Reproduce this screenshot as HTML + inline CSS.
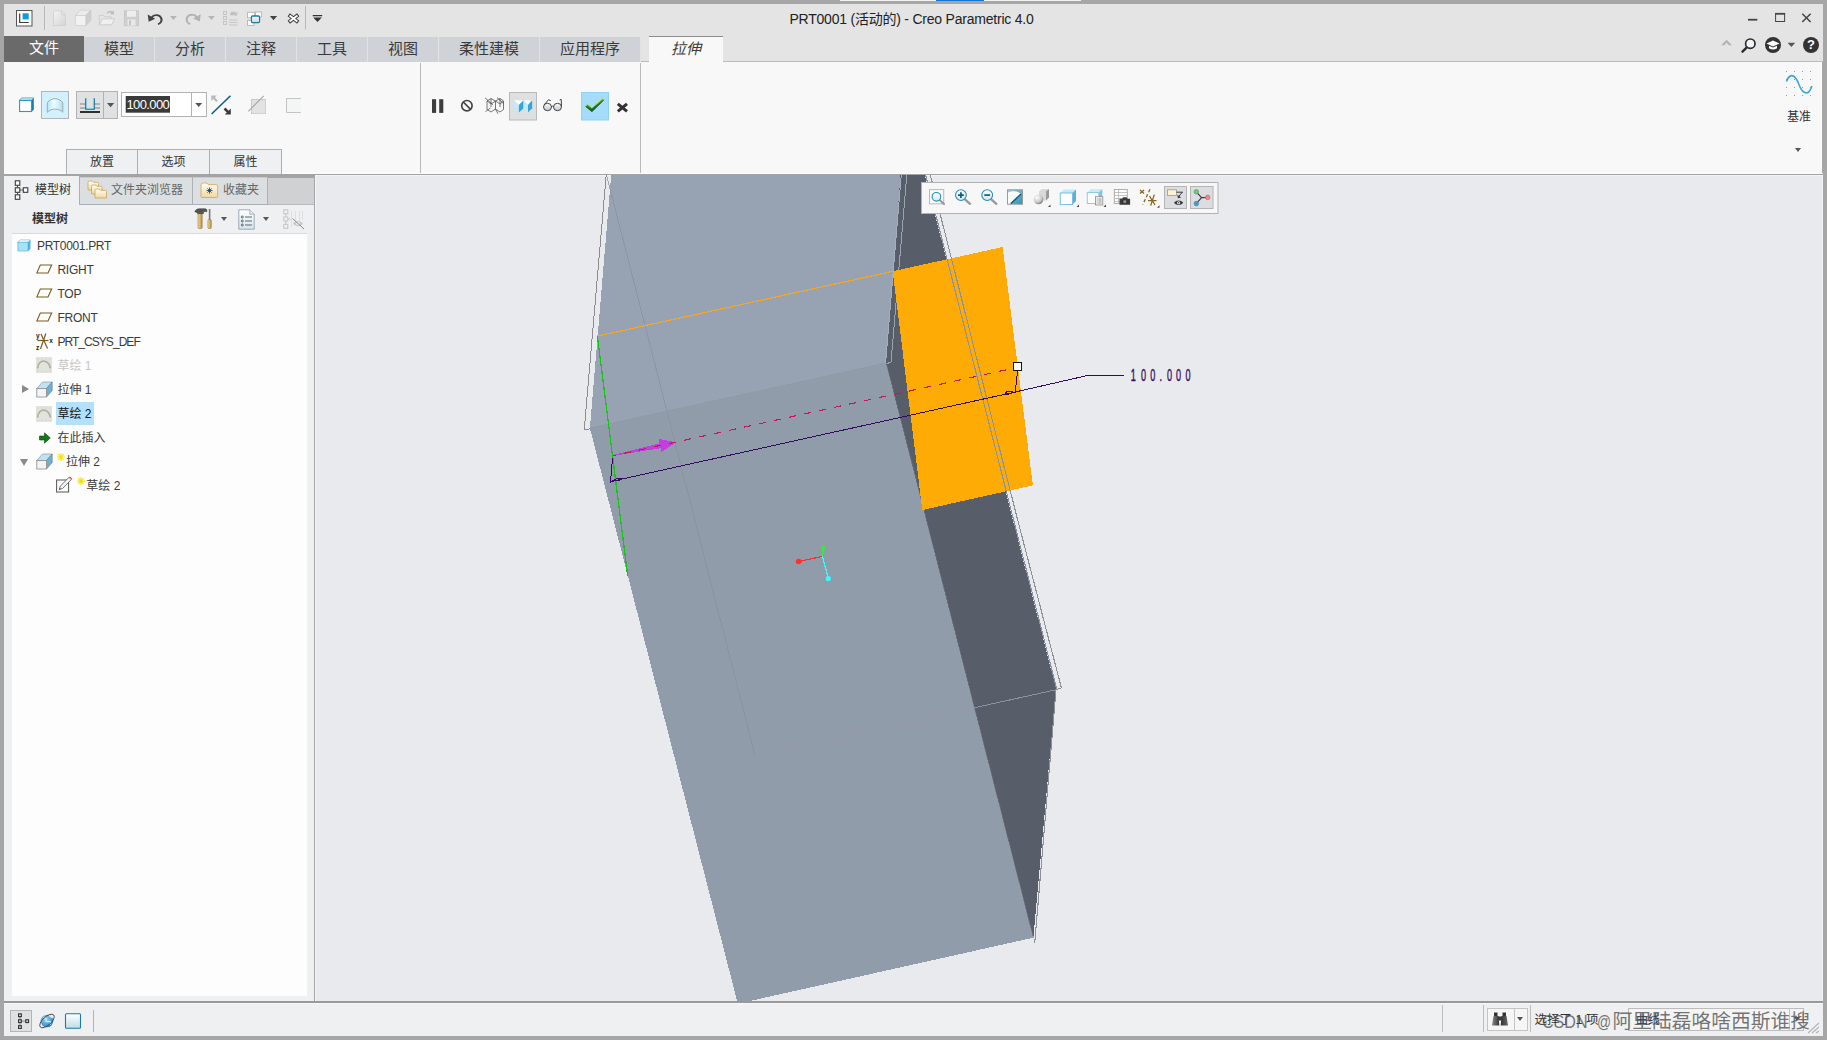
<!DOCTYPE html>
<html lang="zh-CN">
<head>
<meta charset="utf-8">
<title>PRT0001 (活动的) - Creo Parametric 4.0</title>
<style>
*{box-sizing:border-box;margin:0;padding:0}
html,body{width:1827px;height:1040px;overflow:hidden}
body{background:#a6a6a6;font-family:"Liberation Sans","Noto Sans CJK SC",sans-serif;font-size:12px;color:#333;position:relative}
.abs{position:absolute}
#titlebar{left:4px;top:4px;width:1819px;height:58px;background:#e4e4e4}
#title{left:-2px;top:3.5px;width:1819px;text-align:center;font-size:14px;color:#222;letter-spacing:-0.22px;white-space:nowrap}
.tab{top:33px;height:25px;background:#cfd3d7;font-size:15px;line-height:23px;text-align:center;color:#3a3a3a;border-right:1px solid #e0e3e6}
#ribbon{left:4px;top:62px;width:1818px;height:111px;background:#f8f8f8;border-top:1px solid #f8f8f8;box-shadow:inset -1px 0 0 #fdfdfd}
#ribline{left:4px;top:173px;width:1819px;height:2px;background:linear-gradient(#fdfdfd 0,#fdfdfd 1px,#a3a3a3 1px)}
.vsep{width:1px;background:#b4b4b4}
.btab{top:149px;height:25px;background:#eff0f2;border:1px solid #ababab;border-bottom:none;font-size:12px;text-align:center;line-height:24px;color:#333}
#panel{left:4px;top:175px;width:310px;height:826px;background:#eff0f2}
#viewport{left:315px;top:175px;width:1508px;height:826px;background:#e9eaee;overflow:hidden;box-shadow:inset 1px 1px 0 #f3f4f7,inset -1px 0 0 #f3f4f7}
#status{left:4px;top:1001px;width:1819px;height:35px;background:#eff0f2;border-top:2px solid #999;box-shadow:inset 0 1px 0 #f6f7f8}
.trow{left:0;height:24px;line-height:24px;font-size:12px;color:#3a3a3a;white-space:nowrap}
</style>
</head>
<body>
<!-- title bar -->
<div id="titlebar" class="abs">
  <svg class="abs" style="left:0;top:0" width="330" height="32" viewBox="4 4 330 32">
<defs><linearGradient id="gd" x1="0" y1="0" x2="1" y2="1"><stop offset="0" stop-color="#f4f4f4"/><stop offset="1" stop-color="#d4d4d4"/></linearGradient></defs>
<rect x="16.500" y="10.500" width="15.500" height="15.500" fill="#fff" stroke="#555"/>
<path d="M19.700 13.500v9h9" fill="none" stroke="#3a3a3a" stroke-width="1.200"/>
<rect x="22.600" y="13.300" width="6.100" height="6.100" fill="#0a9be0"/>
<path d="M44.500 6v24" stroke="#b9b9b9"/>
<path d="M53.500 10.800h8l4 4v10.700h-12z" fill="url(#gd)" stroke="#cfcfcf" stroke-width=".8"/><path d="M61.500 10.800v4h4" fill="none" stroke="#cfcfcf" stroke-width=".8"/>
<path d="M75.300 15.500l5-5.200h10.500l-5 5.200z" fill="#ececec" stroke="#cdcdcd" stroke-width=".7"/><path d="M85.800 15.500l5-5.200v10l-5 5.300z" fill="#cfcfcf" stroke="#c5c5c5" stroke-width=".7"/><rect x="75.300" y="15.500" width="10.500" height="10" fill="#f2f2f2" stroke="#cdcdcd" stroke-width=".7"/>
<path d="M99.300 24.800v-9.500h4l1.200 1.500h6.500v2" fill="#e6e6e6" stroke="#c6c6c6" stroke-width=".8"/><path d="M99.300 24.800l3-6h12.300l-3 6z" fill="#efefef" stroke="#c6c6c6" stroke-width=".8"/><path d="M106.500 13c2-2.500 4.500-2.800 6-1.500l1-1.500.8 4.500-4.300-.5 1.200-1.200c-1.300-.8-2.800-.3-3.800 1z" fill="#bdbdbd"/>
<path d="M124.500 10.800h14v14.800h-14z" fill="#cfcfcf" stroke="#c0c0c0" stroke-width=".7"/><rect x="127" y="10.800" width="9" height="6" fill="#ededed"/><rect x="127.500" y="19.500" width="8" height="6" fill="#e9e9e9"/><rect x="129" y="20.500" width="2" height="4.500" fill="#c5c5c5"/>
<path d="M147.700 14.600l1 7.200 6.500-3-2.300-1.200c2.500-2.600 6.700-1.600 7.500 1.400.6 2.200-.8 3.900-2.700 4.400l.5 1.600c3-.7 5-3.500 4.200-6.700-1.200-4.600-7.800-5.700-11.200-1.700z" fill="#444"/>
<path d="M170 16h6.800l-3.400 4z" fill="#b5b5b5"/>
<path d="M200.800 14l-1 7.500-6.700-3 2.400-1.300c-2.600-2.600-6.900-1.600-7.700 1.500-.6 2.200.8 4 2.800 4.500l-.5 1.600c-3.100-.7-5.100-3.600-4.300-6.800 1.200-4.700 8-5.800 11.500-1.800z" fill="#b3b3b3"/>
<path d="M208 16h6.800l-3.400 4z" fill="#b5b5b5"/>
<g fill="none" stroke="#c3c3c3" stroke-width=".9"><rect x="223.500" y="11.500" width="3" height="3"/><rect x="223.500" y="16.500" width="3" height="3"/><rect x="223.500" y="21.500" width="3" height="3"/><path d="M229 20h8.500M229 22.500h8.500M229 25h8.500"/></g>
<path d="M230 15l2-3.500 1 1.200c1-.8 2.600-.8 3.500.2l-.8 1c-.6-.5-1.400-.5-1.900-.1l1 1.200zM238 12.500l-2 3.500-1-1.200" fill="#bdbdbd" stroke="#bdbdbd" stroke-width=".5"/>
<g stroke="#b5b5b5" stroke-width=".9" fill="#fbfbfb"><rect x="247.500" y="12.300" width="7" height="5.500"/><rect x="255.500" y="12" width="6" height="5"/><rect x="247.500" y="20.500" width="6.500" height="5"/></g>
<rect x="251.500" y="16" width="8" height="6.500" rx="1" fill="#fff" stroke="#1d7aa3" stroke-width="1.300"/><rect x="252.500" y="18.500" width="6" height="3" fill="#d6e6ee"/>
<path d="M269.900 16h7.200l-3.600 4.200z" fill="#444"/>
<path d="M290.300 16l6.400 5M296.700 16l-6.400 5" stroke="#3a3a3a" stroke-width="3.800" stroke-linecap="square"/>
<path d="M290.300 16l6.400 5M296.700 16l-6.400 5" stroke="#fdfdfd" stroke-width="1.900" stroke-linecap="square"/>
<path d="M305.500 6v23.500" stroke="#b9b9b9"/>
<path d="M312.700 15h9.500v1.300h-9.500zM313.200 17.500h8.600l-4.300 4.400z" fill="#333"/>
</svg>
<svg class="abs" style="left:1710px;top:0" width="109" height="58" viewBox="1714 4 109 58">
<path d="M1748 19.700h9.300" stroke="#444" stroke-width="1.800"/>
<rect x="1775.600" y="13.500" width="9" height="8" fill="none" stroke="#444" stroke-width="1"/><path d="M1775.100 13.800h10" stroke="#444" stroke-width="1.800"/>
<path d="M1802.300 13.700l8.300 8.300M1810.600 13.700l-8.300 8.300" stroke="#444" stroke-width="1.500"/>
<path d="M1721.200 45.300l5.400-5.600 5.400 5.600h-3l-2.400-2.500-2.400 2.500z" fill="#b3b3b3"/>
<circle cx="1750.300" cy="43.700" r="4.700" fill="#eef4f8" stroke="#2c2c2c" stroke-width="1.700"/><path d="M1746.800 47.400l-4.300 4.300" stroke="#2c2c2c" stroke-width="2.400" stroke-linecap="round"/>
<circle cx="1773" cy="45" r="8" fill="#333"/><path d="M1766.500 43.500l6.500-3 6.500 3-6.500 3z" fill="#fff"/><path d="M1769 45.800v2.500q4 2.500 8 0v-2.500l-4 1.800z" fill="#fff"/>
<path d="M1787.600 42.700h7.600l-3.800 4.300z" fill="#555"/>
<circle cx="1811" cy="45" r="8" fill="#333"/>
</svg>
<div class="abs" style="left:1802px;top:34px;width:10px;font-size:13px;line-height:14px;font-weight:bold;color:#fff;text-align:center">?</div>
<div class="abs" style="left:836px;top:-4px;width:241px;height:1px;background:#f1f1f1"></div><div class="abs" style="left:932px;top:-4px;width:48px;height:1px;background:#1673d2"></div>
  <div id="title" class="abs">PRT0001 (活动的) - Creo Parametric 4.0</div>
  <div class="abs" style="left:0;top:32px;width:80px;height:26px;background:#6a6a6a;color:#fff;font-size:15px;line-height:24px;text-align:center">文件</div>
  <div class="tab abs" style="left:80px;width:71px">模型</div>
  <div class="tab abs" style="left:151px;width:71px">分析</div>
  <div class="tab abs" style="left:222px;width:71px">注释</div>
  <div class="tab abs" style="left:293px;width:71px">工具</div>
  <div class="tab abs" style="left:364px;width:71px">视图</div>
  <div class="tab abs" style="left:435px;width:101px">柔性建模</div>
  <div class="tab abs" style="left:536px;width:101px">应用程序</div>
  <div class="abs" style="left:637px;top:57px;width:1182px;height:1px;background:#bcbcbc"></div>
  <div class="abs" style="left:645px;top:32px;width:74px;height:26px;background:#f8f8f8;border-top:1px solid #8c8c8c;font-size:15px;line-height:24px;text-align:center;font-style:italic;color:#3a3a3a">拉伸</div>
</div>
<!-- ribbon -->
<div id="ribbon" class="abs">
<svg class="abs" style="left:6px;top:25px" width="300" height="34" viewBox="10 88 300 34">
<defs>
 <linearGradient id="rs" x1="0" y1="0" x2="1" y2="0"><stop offset="0" stop-color="#aee6fa"/><stop offset=".45" stop-color="#f2fcff"/><stop offset="1" stop-color="#a5e2f8"/></linearGradient>
</defs>
<!-- solid -->
<path d="M19.300 100.300l2.300-2.400h12.200l-2.300 2.400z" fill="#c8ecfa" stroke="#2f96c8" stroke-width=".7"/>
<path d="M31.500 100.300l2.300-2.400v11.600l-2.300 2.400z" fill="#1f7aa8"/>
<rect x="19.600" y="100.500" width="11.900" height="11" fill="#fff" stroke="#2f96c8" stroke-width="1.100"/>
<!-- surface button -->
<rect x="41.500" y="91.500" width="27" height="27" fill="#d3f1fd" stroke="#b2b4b6"/>
<path d="M47.300 112.300V102.800c3.500-5.500 12-5.500 15.500 0v9.500c-4-4.300-11.500-4.300-15.500 0z" fill="url(#rs)" stroke="#a9a9a9" stroke-width="1"/>
<!-- depth button -->
<rect x="76.500" y="91.500" width="41" height="27" fill="#e0e1e3" stroke="#b2b2b2"/>
<path d="M103.500 91.500v27" stroke="#b2b2b2"/>
<path d="M80 104h20M80 108h20" stroke="#a3a3a3" stroke-width="1.500"/>
<path d="M80 112h20" stroke="#2e2e2e" stroke-width="2"/>
<path d="M85.800 98.200v11h8.400v-11" fill="#e0e1e3" stroke="#0f6f9c" stroke-width="1.300"/>
<path d="M86.600 98.200v10.200h6.800v-10.200" fill="none" stroke="#8fdcf7" stroke-width=".7"/>
<path d="M107 103h7.200l-3.600 4.200z" fill="#555"/>
<!-- input -->
<rect x="121.500" y="92.500" width="85" height="24" fill="#fff" stroke="#b2b2b2"/>
<path d="M191.500 92.500v24" stroke="#b2b2b2"/>
<rect x="125.700" y="96" width="44.300" height="16.700" fill="#3a3a3a"/>
<path d="M195.200 103h7l-3.500 4z" fill="#555"/>
<!-- flip -->
<path d="M211.300 95.500h5.500l-1.900 1.900 3 3-1.600 1.600-3-3-2 2z" fill="#b9b9b9"/>
<path d="M230.500 95.700L211.600 114" stroke="#0f5f86" stroke-width="1.600"/>
<path d="M230.800 114.600h-6l2-2-3.200-3.200 1.800-1.800 3.200 3.200 2.200-2.200z" fill="#3a3a3a"/>
<!-- disabled icon -->
<rect x="251.500" y="99.500" width="14" height="14" fill="#e3e3e3" stroke="#cfcfcf"/>
<path d="M251.500 113.500v-14h14" fill="none" stroke="#c4c4c4" stroke-dasharray="1.500,1.500"/>
<path d="M263.700 95.900L248.300 111.300" stroke="#a9a9a9" stroke-width="1.100"/>
<!-- disabled rect -->
<path d="M300.800 98.500h-14.300v14h14.300" fill="#f4f5f5" stroke="#c3c3c3"/>
</svg>
<div class="abs" style="left:122.5px;top:33.5px;font-size:13px;line-height:16px;color:#fff;letter-spacing:-0.62px;white-space:nowrap">100.000</div>
<div class="abs" style="left:62px;top:86px;width:72px;height:25px;z-index:3;background:#eff0f2;border:1px solid #aeaeae;border-bottom:none;font-size:12px;line-height:24px;text-align:center;color:#333">放置</div>
<div class="abs" style="left:134px;top:86px;width:72px;height:25px;z-index:3;background:#eff0f2;border:1px solid #aeaeae;border-bottom:none;border-left:none;font-size:12px;line-height:25px;text-align:center;color:#333">选项</div>
<div class="abs" style="left:206px;top:86px;width:72px;height:25px;z-index:3;background:#eff0f2;border:1px solid #aeaeae;border-bottom:none;border-left:none;font-size:12px;line-height:25px;text-align:center;color:#333">属性</div>
<div class="abs" style="left:416px;top:0px;width:1px;height:110px;background:#b9b9b9"></div>
<div class="abs" style="left:636px;top:0px;width:1px;height:110px;background:#b9b9b9"></div>
<svg class="abs" style="left:424px;top:25px" width="206" height="36" viewBox="428 88 206 36">
<defs><linearGradient id="gl" x1="0" y1="0" x2="0" y2="1"><stop offset="0" stop-color="#ffffff"/><stop offset="1" stop-color="#b9c7cf"/></linearGradient></defs>
<rect x="432" y="99.200" width="4.100" height="13.700" fill="#3d3d3d"/><rect x="439.200" y="99.200" width="4.100" height="13.700" fill="#3d3d3d"/>
<circle cx="466.900" cy="105.700" r="5.200" fill="none" stroke="#444" stroke-width="1.700"/><path d="M463.300 102l7.300 7.400" stroke="#444" stroke-width="1.700"/>
<g fill="none" stroke="#555" stroke-width=".8"><path d="M487 101l4-2.500 4.500 2.500 4.500-2.500 3.500 2.500v8.500l-3.500 2.500-4.500-3-4.500 3-4-2.500z"/><path d="M491 98.500v8.500M495.500 101v9M500 98.500v8.500M487 101l4 3 4.500-3M495.500 101l4.500 3 3.500-3M485 97.800l8 7M497 97.500l7 6.500M485.500 111.500l5-3.500M498 113.800l-2-3.800"/></g>
<rect x="509.500" y="92.500" width="27" height="27.500" fill="#dedfe1" stroke="#b9b9b9"/>
<path d="M513.900 100.300h9.600l-4.600 4.700z" fill="#fdfdfd"/><path d="M523.500 100.300h8.700l-4.200 4.700z" fill="#fdfdfd"/>
<path d="M513.900 100.300l5 4.700v7.500l-5-4.300z" fill="#c3ebf9"/><path d="M518.900 105l4.600-4.700v7.900l-4.600 4.300z" fill="#35a6dd"/>
<path d="M523.500 100.300l4.500 4.700v7.500l-4.500-4.300z" fill="#c3ebf9"/><path d="M528 105l4.200-4.700v7.900l-4.200 4.300z" fill="#35a6dd"/>
<g fill="url(#gl)" stroke="#444" stroke-width="1"><ellipse cx="547.500" cy="107" rx="4" ry="3.700"/><ellipse cx="557.500" cy="107" rx="4" ry="3.700"/></g>
<path d="M551.500 106.500q1-.8 2 0M544 105l4.500-5.300 2.300 1M561.500 106.500l-.3-7.200-1.500.7" fill="none" stroke="#444" stroke-width="1"/>
<rect x="581.500" y="92.500" width="27" height="27.500" fill="#a6dcfb" stroke="#8fd2f7"/>
<path d="M585 106.300l2.700-1.900 4.200 3.400 10.400-8.800 2.300.5-12.600 12.500z" fill="#2c8a3c"/>
<path d="M585 106.300l6.900 5.600 12.700-12.400-12.800 9.400z" fill="#1d5f2f"/>
<path d="M585.400 106l2.300-1.500 4.200 3.400 10.500-8.800 1.600.4" fill="none" stroke="#c3e31a" stroke-width="1"/>
<path d="M617.800 103.800l9.200 7.500M627 103.800l-9.200 7.500" stroke="#333" stroke-width="3"/>
</svg>
<svg class="abs" style="left:1780px;top:5px" width="30" height="30" viewBox="1784 68 30 30"><g fill="#9a9a9a"><rect x="1786" y="71" width="1" height="1"/><rect x="1786" y="79" width="1" height="1"/><rect x="1786" y="87" width="1" height="1"/><rect x="1786" y="95" width="1" height="1"/><rect x="1794" y="71" width="1" height="1"/><rect x="1794" y="79" width="1" height="1"/><rect x="1794" y="87" width="1" height="1"/><rect x="1794" y="95" width="1" height="1"/><rect x="1802" y="71" width="1" height="1"/><rect x="1802" y="79" width="1" height="1"/><rect x="1802" y="87" width="1" height="1"/><rect x="1802" y="95" width="1" height="1"/><rect x="1810" y="71" width="1" height="1"/><rect x="1810" y="79" width="1" height="1"/><rect x="1810" y="87" width="1" height="1"/><rect x="1810" y="95" width="1" height="1"/></g>
<path d="M1786.500 81.500c2-6 6-8 9.500-3s3.500 11 8 13.500 6-1 8-6" fill="none" stroke="#3aa7dc" stroke-width="1.600"/></svg>
<div class="abs" style="left:1783px;top:47px;font-size:12px;line-height:14px;color:#333;white-space:nowrap">基准</div>
<div class="abs" style="left:1791px;top:84.7px;width:0;height:0;border:3.700px solid transparent;border-top:4.400px solid #555;border-bottom:none"></div>
</div>
<div id="ribline" class="abs"></div>
<!-- left panel -->
<div id="panel" class="abs">
<div class="abs" style="left:0;top:0;width:310px;height:1px;background:#a3a3a3"></div>
<div class="abs" style="left:263.500px;top:1px;width:46.500px;height:29px;background:#d0d1d3;border-top:2px solid #a3a3a3;border-bottom:1px solid #b9babc"></div>
<div class="abs" style="left:75px;top:1px;width:112.500px;height:29px;background:#dcdfe1;border:1px solid #adb0b3;border-top:1px solid #a3a3a3;border-right:none;box-shadow:inset 0 1px 0 #c9cbce"></div>
<div class="abs" style="left:187.500px;top:1px;width:76.500px;height:29px;background:#dcdfe1;border:1px solid #adb0b3;border-top:1px solid #a3a3a3;box-shadow:inset 0 1px 0 #c9cbce"></div>
<div class="abs" style="left:107px;top:8px;font-size:12px;line-height:14px;color:#666;white-space:nowrap">文件夹浏览器</div>
<div class="abs" style="left:219px;top:8px;font-size:12px;line-height:14px;color:#666;white-space:nowrap">收藏夹</div>
<svg class="abs" style="left:83px;top:5px" width="21" height="20" viewBox="0 0 21 20"><defs><linearGradient id="gf" x1="0" y1="0" x2="0" y2="1"><stop offset="0" stop-color="#fffdf6"/><stop offset="1" stop-color="#f3d79c"/></linearGradient></defs><g stroke="#c9a55a" stroke-width=".8" fill="url(#gf)"><path d="M1 2.500q0-1.500 1.500-1.500h3l1 1.300h4q1 0 1 1v6.700H1z"/><path d="M4.500 6.500q0-1.500 1.500-1.500h3l1 1.300h4q1 0 1 1v6.700H4.500z"/><path d="M8 10.500q0-1.500 1.500-1.500h3l1 1.300h5q1 0 1 1v6.700H8z"/></g></svg>
<svg class="abs" style="left:195.500px;top:7px" width="19" height="17" viewBox="0 0 19 17"><path d="M1 3q0-2 2-2h4l1.200 1.600h8q1.500 0 1.500 1.500v10.400q0 1-1 1H2q-1 0-1-1z" fill="url(#gf)" stroke="#c9a55a" stroke-width=".8"/><path d="M9.500 5.500v6M6.500 8.500h6M7.400 6.400l4.200 4.200M11.600 6.400l-4.200 4.200" stroke="#0d4f7a" stroke-width=".9"/></svg>
<svg class="abs" style="left:10px;top:4.500px" width="15" height="20" viewBox="0 0 15 20"><g fill="#fff" stroke="#3a3a3a" stroke-width="1.100"><path d="M3.500 5v10M3.500 10h6" fill="none" stroke-width=".8"/><rect x="1.300" y=".8" width="4.500" height="4.500"/><rect x="1.300" y="7.800" width="4.500" height="4.500"/><rect x="1.300" y="14.800" width="4.500" height="4.500"/><rect x="9.300" y="7.800" width="4.500" height="4.500"/></g></svg>
<div class="abs" style="left:31px;top:7.500px;font-size:12px;line-height:14px;color:#333;white-space:nowrap">模型树</div>
<div class="abs" style="left:28px;top:36.500px;font-size:12px;line-height:14px;font-weight:bold;color:#333;white-space:nowrap">模型树</div>
<svg class="abs" style="left:190px;top:33px" width="19" height="21" viewBox="0 0 19 21"><defs><linearGradient id="gw" x1="0" y1="0" x2="1" y2="0"><stop offset="0" stop-color="#f3dfa8"/><stop offset="1" stop-color="#b88a3c"/></linearGradient></defs><rect x="4" y="5" width="4.200" height="15.500" rx="1" fill="url(#gw)" stroke="#8a6a2a" stroke-width=".5"/><path d="M.8 3.800C2 1 4 .8 6 .8h5.500q1.500 0 1.500 2.800H9.500v2H3.800q-1.500-1.800-3-1.800z" fill="#555" stroke="#2c2c2c" stroke-width=".5"/><rect x="14.800" y="1" width="1.600" height="11" fill="#777"/><rect x="13.900" y="11.500" width="3.400" height="9" rx="1" fill="url(#gw)" stroke="#8a6a2a" stroke-width=".5"/></svg>
<div class="abs" style="left:217px;top:42px;width:0;height:0;border:3.500px solid transparent;border-top:4.500px solid #555;border-bottom:none"></div>
<svg class="abs" style="left:233.500px;top:34px" width="17" height="21" viewBox="0 0 17 21"><defs><linearGradient id="gp" x1="0" y1="0" x2="0" y2="1"><stop offset="0" stop-color="#ffffff"/><stop offset="1" stop-color="#d2e6ee"/></linearGradient></defs><path d="M.8 .8h11l4.400 4.400v15H.8z" fill="url(#gp)" stroke="#8a9aa3" stroke-width=".8"/><path d="M11.800 .8v4.400h4.400" fill="#e8eef2" stroke="#8a9aa3" stroke-width=".7"/><g fill="none" stroke="#555" stroke-width=".9"><circle cx="4.300" cy="8" r="1"/><circle cx="4.300" cy="12" r="1"/><circle cx="4.300" cy="16" r="1"/><path d="M7 8h7M7 12h7M7 16h7"/></g></svg>
<div class="abs" style="left:259px;top:42px;width:0;height:0;border:3.500px solid transparent;border-top:4.500px solid #555;border-bottom:none"></div>
<svg class="abs" style="left:278.500px;top:34px" width="22" height="21" viewBox="0 0 22 21"><g fill="none" stroke="#c6c6c6" stroke-width="1"><rect x=".8" y=".8" width="4" height="4"/><rect x=".8" y="8" width="4" height="4"/><rect x=".8" y="15.300" width="4" height="4"/><path d="M2.800 4.800v3.200M2.800 12v3.300M4.800 10h3"/><path d="M8.500 2v16M12.500 2v12M16.500 2v10M19.500 2v9" stroke="#dedede"/></g><path d="M10 14.500c2.500-3.500 7.500-3.500 10 0c-2.500 3.500-7.500 3.500-10 0z" fill="#c9c9c9"/><circle cx="15" cy="14.500" r="1.800" fill="#efefef"/><path d="M9.500 9.500l11.500 10.500" stroke="#8a8a8a" stroke-width="1"/></svg>
<div class="abs" style="left:8px;top:58px;width:295px;height:763px;background:#fdfdfd;border-top:1px solid #d9dadc"></div>
<svg class="abs" style="left:12.5px;top:64px" width="14" height="13" viewBox="0 0 14 13"><path d="M.7 3.300L2.800 .7h10.500v8.800L11 12.300H.7z" fill="#2f96c8"/><path d="M2.800 .9h10.300L11 3.200H.9z" fill="#d6f1fb"/><path d="M11.200 3.400l2-2.300v8.300l-2 2.400z" fill="#59b7e0"/><rect x="1.200" y="3.500" width="9.600" height="8.300" fill="#a9e2f7"/></svg>
<div class="abs trow" style="left:33px;top:59px;letter-spacing:-0.33px">PRT0001.PRT</div>
<svg class="abs" style="left:31.5px;top:89.4px" width="17" height="10" viewBox="0 0 17 10"><path d="M4.3 1h11.400L12 9H.8z" fill="#fffef8" stroke="#7a5a22" stroke-width="1.100"/></svg>
<div class="abs trow" style="left:53.4px;top:83px;letter-spacing:-0.2px">RIGHT</div>
<svg class="abs" style="left:31.5px;top:113.4px" width="17" height="10" viewBox="0 0 17 10"><path d="M4.3 1h11.400L12 9H.8z" fill="#fffef8" stroke="#7a5a22" stroke-width="1.100"/></svg>
<div class="abs trow" style="left:53.4px;top:107px;letter-spacing:-0.2px">TOP</div>
<svg class="abs" style="left:31.5px;top:137.4px" width="17" height="10" viewBox="0 0 17 10"><path d="M4.3 1h11.400L12 9H.8z" fill="#fffef8" stroke="#7a5a22" stroke-width="1.100"/></svg>
<div class="abs trow" style="left:53.4px;top:131px;letter-spacing:-0.2px">FRONT</div>
<svg class="abs" style="left:31.5px;top:156.9px" width="18" height="18" viewBox="0 0 18 18"><g stroke="#7a5a22" stroke-width="1.200" fill="none"><path d="M1.500 8.500h11"/><path d="M9.800 1.500L4.500 17"/><path d="M5 2l6.500 14.500"/></g><g font-family="'Liberation Sans',sans-serif" font-size="6.500" font-weight="bold" fill="#222"><text x="0" y="5.500">y</text><text x="13.300" y="11">x</text><text x="0" y="17.500">z</text></g></svg>
<div class="abs trow" style="left:53.4px;top:155px;letter-spacing:-0.95px">PRT_CSYS_DEF</div>
<svg class="abs" style="left:32px;top:182.4px" width="16" height="16" viewBox="0 0 16 16"><rect width="16" height="16" fill="#e3e3de"/><g fill="#c5c5bd"><circle cx="2" cy="2" r=".6"/><circle cx="6" cy="2" r=".6"/><circle cx="10" cy="2" r=".6"/><circle cx="14" cy="2" r=".6"/><circle cx="2" cy="14" r=".6"/><circle cx="6" cy="14" r=".6"/><circle cx="10" cy="14" r=".6"/><circle cx="14" cy="14" r=".6"/><circle cx="2" cy="6" r=".6"/><circle cx="2" cy="10" r=".6"/><circle cx="14" cy="6" r=".6"/><circle cx="14" cy="10" r=".6"/></g><path d="M1.500 11.500C2 6.500 5 4 8 4.200s5.500 3 6.500 7.300" fill="none" stroke="#b4b09c" stroke-width="1.700"/></svg>
<div class="abs trow" style="left:53.4px;top:179px;color:#c6c6c6">草绘 1</div>
<div class="abs" style="left:17.5px;top:210px;width:0;height:0;border:4.500px solid transparent;border-left:7.500px solid #8a8a8a;border-right:none"></div>
<svg class="abs" style="left:31.8px;top:205.5px" width="17" height="17" viewBox="0 0 17 17"><path d="M.8 7.500L6.500 1h9.700L10.500 7.500z" fill="#bfe3f2" stroke="#8a9aa2" stroke-width=".7"/><path d="M10.500 7.500L16.200 1v8.500L10.500 16z" fill="#6fb0cf" stroke="#6c8796" stroke-width=".7"/><rect x=".8" y="7.500" width="9.700" height="8.500" fill="#f4f4f4" stroke="#8a8a8a" stroke-width=".8"/></svg>
<div class="abs trow" style="left:53.4px;top:203px;">拉伸 1</div>
<svg class="abs" style="left:32px;top:230.5px" width="16" height="16" viewBox="0 0 16 16"><rect width="16" height="16" fill="#e3e3de"/><g fill="#c5c5bd"><circle cx="2" cy="2" r=".6"/><circle cx="6" cy="2" r=".6"/><circle cx="10" cy="2" r=".6"/><circle cx="14" cy="2" r=".6"/><circle cx="2" cy="14" r=".6"/><circle cx="6" cy="14" r=".6"/><circle cx="10" cy="14" r=".6"/><circle cx="14" cy="14" r=".6"/><circle cx="2" cy="6" r=".6"/><circle cx="2" cy="10" r=".6"/><circle cx="14" cy="6" r=".6"/><circle cx="14" cy="10" r=".6"/></g><path d="M1.500 11.500C2 6.500 5 4 8 4.200s5.500 3 6.500 7.300" fill="none" stroke="#b4b09c" stroke-width="1.700"/></svg>
<div class="abs" style="left:52px;top:227px;width:38px;height:23px;background:#b3e0fb"></div>
<div class="abs trow" style="left:53.4px;top:227px;color:#111">草绘 2</div>
<svg class="abs" style="left:34.5px;top:256.7px" width="12" height="12" viewBox="0 0 12 12"><path d="M.5 4h5V.8L11.300 6 5.500 11.200V8h-5z" fill="#147a14" stroke="#0a4f0a" stroke-width=".6"/></svg>
<div class="abs trow" style="left:53.4px;top:251px;">在此插入</div>
<div class="abs" style="left:16.3px;top:283.7px;width:0;height:0;border:4.500px solid transparent;border-top:7.500px solid #8a8a8a;border-bottom:none"></div>
<svg class="abs" style="left:31.8px;top:277.7px" width="17" height="17" viewBox="0 0 17 17"><path d="M.8 7.500L6.500 1h9.700L10.500 7.500z" fill="#bfe3f2" stroke="#8a9aa2" stroke-width=".7"/><path d="M10.500 7.500L16.200 1v8.500L10.500 16z" fill="#6fb0cf" stroke="#6c8796" stroke-width=".7"/><rect x=".8" y="7.500" width="9.700" height="8.500" fill="#f4f4f4" stroke="#8a8a8a" stroke-width=".8"/></svg>
<svg class="abs" style="left:52.7px;top:277.7px" width="8" height="8" viewBox="0 0 8 8"><path d="M4 0v8M0 4h8M1.200 1.200l5.600 5.600M6.800 1.200L1.200 6.800" stroke="#f2e200" stroke-width="1.050"/></svg>
<div class="abs trow" style="left:62px;top:275px;">拉伸 2</div>
<svg class="abs" style="left:52px;top:301px" width="17" height="17" viewBox="0 0 17 17"><rect x=".6" y="4" width="12" height="12" fill="#fdfdfd" stroke="#555" stroke-width="1"/><path d="M3.300 13.500l1-3.300L13 1.300l2.300 2.300-8.700 8.900z" fill="#f3f3f3" stroke="#555" stroke-width=".8"/><path d="M13 1.300l1-.9 2.300 2.300-1 .9z" fill="#e0504a"/><path d="M3.300 13.500l.5-1.600 1.100 1.100z" fill="#333"/></svg>
<svg class="abs" style="left:72.8px;top:301.5px" width="8" height="8" viewBox="0 0 8 8"><path d="M4 0v8M0 4h8M1.200 1.200l5.600 5.600M6.800 1.200L1.200 6.800" stroke="#f2e200" stroke-width="1.050"/></svg>
<div class="abs trow" style="left:82.3px;top:299px;">草绘 2</div>
</div>
<!-- viewport -->
<div id="viewport" class="abs">
<svg class="abs" style="left:0;top:0" width="1508" height="826" viewBox="315 175 1508 826" shape-rendering="crispEdges">
  <!-- faces -->
  <polygon points="611.2,175 900.5,175 886.1,363 589.9,428.2" fill="#97a3b3"/>
  <polygon points="589.9,428.2 886.1,363 1033.4,937.7 737.8,1003.7" fill="#919cab"/>
  <polygon points="900.5,175 924.8,175 1055.9,688.6 1033.4,937.7 886.1,363" fill="#575d69"/>
  <!-- faint hidden edges -->
  <g fill="none" stroke-width="1">
    <line x1="589.9" y1="428.2" x2="886.1" y2="363" stroke="#8f99a6" stroke-opacity=".8"/>
    <line x1="606.5" y1="175" x2="755.2" y2="756" stroke="#8b8f9b" stroke-opacity=".75"/>
    <line x1="755.2" y1="756" x2="974" y2="707.8" stroke="#9c98a6" stroke-opacity=".7"/>
    <line x1="974" y1="707.8" x2="1055" y2="690" stroke="#8d939c"/>
    <!-- outlines -->
    <polyline points="606.2,175 584.2,430 590.5,428.8" stroke="#8c8c90"/>
    <line x1="901.3" y1="175" x2="885.6" y2="363" stroke="#a3afbf"/>
    <polyline points="906.8,175 891,362.4 886,363.6" stroke="#9aa3b0"/>
    <line x1="886.3" y1="363" x2="1033.4" y2="937.7" stroke="#6b7280" stroke-opacity=".6"/>
  </g>
  <!-- orange -->
  <polygon points="892.7,271.3 1002.6,247 1032.9,485.4 922.3,510" fill="#ffab06"/>
  <line x1="597.4" y1="336.1" x2="893" y2="271.3" stroke="#f5a623" stroke-width="1.2"/>
  <g fill="none" stroke-width="1.1">
    <polyline points="925.6,175 1056.6,688.6" stroke="#8b93a0"/>
    <polyline points="930.3,175 997.3,440 1017.7,520 1061.4,687.9 1056,689.6 1034.7,943.4" stroke="#8c9098"/>
  </g>
  <!-- green line -->
  <line x1="597.4" y1="336.1" x2="627.7" y2="575.8" stroke="#19c419" stroke-width="1.3"/>
  <!-- magenta arrow -->
  <polygon points="613.1,455.9 613.1,454.9 659.2,443.6 659.2,438.9 675.9,442.4 661.2,452.2 661.2,448.1" fill="#c03fde"/>
  
  <!-- dashed red -->
  <line x1="613" y1="455.8" x2="1013" y2="368.3" stroke="#c8145a" stroke-width="1.15" stroke-dasharray="6.9,8.45" stroke-dashoffset="3.75"/>
  <!-- purple dimension -->
  <g fill="none" stroke="#330a60" stroke-width="1">
    <polyline points="612.5,458 610.4,483.2"/>
    <polyline points="610.4,481.6 1015.2,392 1088.4,375.3 1123.8,375.3"/>
    <polyline points="1017.7,370 1015.2,392.8"/>
    <polygon points="611.5,481.3 618,478 623,478.6 618.5,480.6" />
    <polygon points="1014.5,392.2 1007,391.5 1004.5,394.4 1009,394" />
  </g>
  <rect x="1013.6" y="362.7" width="8" height="8" fill="#fff" stroke="#111" stroke-width="1.2"/>
  <text transform="translate(1128,381) scale(0.55,1)" x="5.0 23.6 40.3 57.3 71.0 87.2 104.5" y="0" font-family="'Liberation Sans',sans-serif" font-size="16.5" fill="#3a0f63" stroke="#3a0f63" stroke-width=".45">100.000</text>
  <!-- csys -->
  <g stroke-width="1.2" fill="none">
    <line x1="822.5" y1="556.4" x2="798.7" y2="561.5" stroke="#ff3030"/>
    <line x1="822.5" y1="556.4" x2="823.2" y2="548.2" stroke="#30f030"/>
    <line x1="822.5" y1="556.4" x2="828.3" y2="578.6" stroke="#30ffff"/>
  </g>
  <circle cx="798.7" cy="561.5" r="2.8" fill="#ff3030" shape-rendering="auto"/>
  <circle cx="823.2" cy="548.2" r="2.2" fill="#30f030" shape-rendering="auto"/>
  <circle cx="828.3" cy="578.6" r="2.6" fill="#30ffff" shape-rendering="auto"/>
</svg>
<svg class="abs" style="left:606px;top:7px" width="298" height="32" viewBox="921 182 298 32">
  <defs>
    <linearGradient id="gcube" x1="0" y1="0" x2="0" y2="1"><stop offset="0" stop-color="#bfe6f5"/><stop offset="1" stop-color="#6ab3d6"/></linearGradient>
    <linearGradient id="gteal" x1="0" y1="0" x2="1" y2="1"><stop offset="0" stop-color="#9fd4e6"/><stop offset="1" stop-color="#2f8fb0"/></linearGradient>
    <radialGradient id="gsph" cx=".35" cy=".3" r=".8"><stop offset="0" stop-color="#ffffff"/><stop offset=".6" stop-color="#c8c8c8"/><stop offset="1" stop-color="#6a6a6a"/></radialGradient>
    <linearGradient id="glens" x1="0" y1="0" x2="0" y2="1"><stop offset="0" stop-color="#ffffff"/><stop offset="1" stop-color="#cfeaf6"/></linearGradient>
  </defs>
  <rect x="921.5" y="182.5" width="296.5" height="31" fill="#f7f7f7" stroke="#b2b2b2"/>
  <!-- 1 refit -->
  <rect x="929.5" y="189.6" width="14.2" height="14.2" fill="#fbfbfb" stroke="#b9b9b9"/>
  <line x1="939.6" y1="200" x2="944" y2="204" stroke="#9a9a9a" stroke-width="2.2" stroke-linecap="round"/>
  <circle cx="936.4" cy="196.8" r="4.3" fill="url(#glens)" stroke="#2a8db3" stroke-width="1.1"/>
  <!-- 2 zoom in -->
  <line x1="965" y1="199.3" x2="970" y2="203.8" stroke="#9a9a9a" stroke-width="2.4" stroke-linecap="round"/>
  <circle cx="960.9" cy="195.1" r="5.4" fill="url(#glens)" stroke="#2a8db3" stroke-width="1.1"/>
  <path d="M958 195.1h5.8M960.9 192.2v5.8" stroke="#0d5f86" stroke-width="1.7" fill="none"/>
  <!-- 3 zoom out -->
  <line x1="991.3" y1="199.3" x2="996.3" y2="203.8" stroke="#9a9a9a" stroke-width="2.4" stroke-linecap="round"/>
  <circle cx="987.2" cy="195.1" r="5.4" fill="url(#glens)" stroke="#2a8db3" stroke-width="1.1"/>
  <path d="M984.3 195.1h5.8" stroke="#0d5f86" stroke-width="1.7" fill="none"/>
  <!-- 4 repaint -->
  <rect x="1007.5" y="189.8" width="15" height="14.4" fill="url(#gteal)" stroke="#9a9a9a"/>
  <path d="M1008 192.5c6-2.5 11-1 13 1.5l-11 9.7h-2z" fill="#fdfdfd"/>
  <path d="M1011 203.5l10-9.5" stroke="#0d5f86" stroke-width="1.6" fill="none"/>
  <!-- 5 display style -->
  <path d="M1039 191.5l3-2.5h7v8.5l-3 3h-7z" fill="#d9d9d9"/>
  <path d="M1046 200.5l3-3v-8.5l-3 2.5z" fill="#9a9a9a"/>
  <circle cx="1038.5" cy="199.5" r="4.8" fill="url(#gsph)"/>
  <path d="M1050.5 204.5v2.5h-2.5z" fill="#444"/>
  <!-- 6 cube -->
  <path d="M1060.3 193l3.500-3.500h12.200l-3.500 3.500z" fill="#c3e8f7"/>
  <path d="M1072.500 193l3.500-3.500v11.500l-3.500 3.500z" fill="#5faed6"/>
  <rect x="1060.300" y="193" width="12.200" height="11.500" fill="#fff" stroke="#79c2e4" stroke-width="1"/>
  <path d="M1079 204.500v2.500h-2.500z" fill="#444"/>
  <!-- 7 cube+list -->
  <path d="M1087.300 192.500l3.500-3.500h11.500l-3.500 3.500z" fill="#c9ebf8"/>
  <path d="M1098.800 192.500l3.500-3.500v11l-3.500 3.500z" fill="#7fc2e2"/>
  <rect x="1087.300" y="192.500" width="11.500" height="11" fill="#fff" stroke="#8ccbe8" stroke-width="1"/>
  <rect x="1095.500" y="196.700" width="7.300" height="8.300" fill="#f4f4f4" stroke="#8a8a8a" stroke-width=".8"/>
  <path d="M1098.500 199h3M1098.500 201h3M1098.500 203h3" stroke="#777" stroke-width=".8"/>
  <path d="M1096.800 199h.9M1096.800 201h.9M1096.800 203h.9" stroke="#777" stroke-width=".8"/>
  <path d="M1106 204.500v2.500h-2.500z" fill="#444"/>
  <!-- 8 table+camera -->
  <rect x="1114.300" y="189.500" width="13" height="14" fill="#fdfdfd" stroke="#a5a5a5" stroke-width=".9"/>
  <path d="M1114.300 192.500h13M1114.300 195.500h13M1114.300 198.500h13M1114.300 201.500h13M1118.500 189.500v14" stroke="#b5b5b5" stroke-width=".8" fill="none"/>
  <path d="M1119.500 198.800h2.600l1-1.600h3.400l1 1.600h2.600v5.900h-10.600z" fill="#3a3a3a"/>
  <circle cx="1124.800" cy="201.700" r="2.100" fill="#8a8a8a" stroke="#1e1e1e" stroke-width=".7"/>
  <!-- 9 datum display -->
  <g stroke="#8a6420" stroke-width="1.300" fill="none">
    <path d="M1140 190l4 3.600M1144 190l-4 3.600"/>
    <path d="M1150 189.300l-7.300 15.500" stroke-dasharray="3.200,2.300"/>
    <path d="M1148 200.600h8.500M1154.300 194.600l-3.600 11M1149.500 196l5.500 9"/>
  </g>
  <path d="M1159.500 205.300v2.500h-2.500z" fill="#444"/>
  <!-- 10 annotation display (selected) -->
  <rect x="1164.500" y="186.500" width="22" height="22" fill="#dcdde0" stroke="#b4b4b4"/>
  <rect x="1167.500" y="189.800" width="9" height="5.600" fill="#fdf3d0" stroke="#9a9a9a" stroke-width=".8"/>
  <path d="M1176.500 192.200h6.300M1182.300 192.200l-3.800 4.500" stroke="#3a3a3a" stroke-width="1" fill="none"/>
  <path d="M1177.300 194.800l.6 3.400 3.400-.6z" fill="#3a3a3a"/>
  <path d="M1174 202.700c2.400-3 6.800-3 9.200 0c-2.400 3-6.800 3-9.200 0z" fill="#3a3a3a"/>
  <circle cx="1178.600" cy="202.700" r="1.500" fill="#fff"/><circle cx="1178.600" cy="202.700" r=".7" fill="#3a3a3a"/>
  <!-- 11 spin center (selected) -->
  <rect x="1190.500" y="186.500" width="22.500" height="22" fill="#dcdde0" stroke="#b4b4b4"/>
  <path d="M1196.300 191.800l5.300 5.800l6-.1M1201.600 197.600l-5.200 5.800" stroke="#3a3a3a" stroke-width="1.100" fill="none"/>
  <circle cx="1196.300" cy="191.800" r="2.300" fill="#7fbf7f" stroke="#4f9a55" stroke-width=".6"/>
  <circle cx="1207.700" cy="197.400" r="2.300" fill="#ef8a84" stroke="#c95e5a" stroke-width=".6"/>
  <circle cx="1196.300" cy="203.600" r="2.300" fill="#4f9dc6" stroke="#2f7ea8" stroke-width=".6"/>
</svg>
</div>
<!-- status -->
<div id="status" class="abs">
<svg class="abs" style="left:0;top:0" width="100" height="33" viewBox="4 1003 100 33">
<defs><radialGradient id="gg" cx=".4" cy=".35" r=".7"><stop offset="0" stop-color="#9fd8f5"/><stop offset="1" stop-color="#1f7ec0"/></radialGradient><linearGradient id="gq" x1="0" y1="0" x2="0" y2="1"><stop offset="0" stop-color="#ffffff"/><stop offset="1" stop-color="#bcdcea"/></linearGradient></defs>
<rect x="10.500" y="1010.500" width="21" height="21" fill="#e0e1e3" stroke="#b5b5b5"/>
<g fill="#fff" stroke="#333" stroke-width="1.200"><path d="M20 1016v10M20 1021.100h6" fill="none" stroke="#777" stroke-width=".8"/><rect x="18.600" y="1013.900" width="2.700" height="2.700"/><rect x="18.600" y="1019.800" width="2.700" height="2.700"/><rect x="18.600" y="1025.700" width="2.700" height="2.700"/><rect x="25.800" y="1019.800" width="2.700" height="2.700"/></g>
<circle cx="47" cy="1021" r="6.300" fill="url(#gg)"/><path d="M43.500 1018c2-1 3 .5 2.500 2s1.500 2 3 1.500 2 1.500 1 3M49 1015.500c1 1 2.500 1 3.500 2.500" fill="none" stroke="#d5efff" stroke-width="1.200"/>
<ellipse cx="47" cy="1021" rx="9" ry="4.200" transform="rotate(-42 47 1021)" fill="none" stroke="#444" stroke-width=".9"/>
<rect x="65.500" y="1013.800" width="15" height="14.500" rx="1" fill="url(#gq)" stroke="#1d7aa3" stroke-width="1.100"/>
<path d="M93.500 1010v22" stroke="#b5b5b5"/>
</svg>
<div class="abs" style="left:1438px;top:2px;width:1px;height:27px;background:#bdbdbd"></div>
<div class="abs" style="left:1479px;top:2px;width:1px;height:27px;background:#bdbdbd"></div>
<div class="abs" style="left:1526px;top:2px;width:1px;height:27px;background:#bdbdbd"></div>
<div class="abs" style="left:1482.500px;top:4.500px;width:41px;height:23px;background:#f6f6f6;border:1px solid #c4c4c4"></div>
<div class="abs" style="left:1509.500px;top:4.500px;width:1px;height:23px;background:#c4c4c4"></div>
<svg class="abs" style="left:1487px;top:8px" width="18" height="16" viewBox="0 0 18 16"><defs><linearGradient id="gb" x1="0" y1="0" x2="1" y2="0"><stop offset="0" stop-color="#8a8a8a"/><stop offset=".5" stop-color="#2a2a2a"/><stop offset="1" stop-color="#6a6a6a"/></linearGradient></defs><path d="M3 1.500h3.500v4.500h-3.500zM11.500 1.500h3.500v4.500h-3.500z" fill="#333"/><path d="M2.500 5h5l.8 9.500h-7.300zM10.500 5h5l1.500 9.500h-7.300z" fill="url(#gb)"/><rect x="7" y="5.500" width="4" height="4" fill="#3a3a3a"/></svg>
<div class="abs" style="left:1512.800px;top:14px;width:0;height:0;border:3.600px solid transparent;border-top:4.200px solid #555;border-bottom:none"></div>
<div class="abs" style="left:1530.500px;top:10px;font-size:12.500px;line-height:14px;color:#333;white-space:nowrap">选择了 1 项</div>
<div class="abs" style="left:1624px;top:4.500px;width:176px;height:23px;background:#f4f4f5;border:1px solid #bcbcbc"></div>
<div class="abs" style="left:1785px;top:4.500px;width:1px;height:23px;background:#c4c4c4"></div>
<div class="abs" style="left:1632px;top:10px;font-size:12px;line-height:14px;color:#333;white-space:nowrap">曲线</div>
<div class="abs" style="left:1789.500px;top:14px;width:0;height:0;border:3.600px solid transparent;border-top:4.200px solid #555;border-bottom:none"></div>
<svg class="abs" style="left:1803px;top:19px" width="13" height="12" viewBox="0 0 13 12"><path d="M12 1L1 11M12 5L5 11M12 9l-3 2" stroke="#b5b5b5" stroke-width="1.100"/></svg>
<div class="abs" style="left:1537.500px;top:6px;font-size:18.300px;line-height:26px;color:rgba(80,80,80,.78);white-space:nowrap;font-weight:400;transform:scaleX(.88);transform-origin:0 0">CSDN</div><div class="abs" style="left:1592.500px;top:5.500px;font-size:18.300px;line-height:26px;color:rgba(80,80,80,.78);white-space:nowrap;font-weight:400;transform:scaleX(.76);transform-origin:0 0">@</div><div class="abs" style="left:1608.500px;top:5px;font-size:19.750px;line-height:26px;color:rgba(80,80,80,.78);white-space:nowrap;font-weight:400">阿里陆磊咯啥西斯谁搜</div>
</div>
</body>
</html>
